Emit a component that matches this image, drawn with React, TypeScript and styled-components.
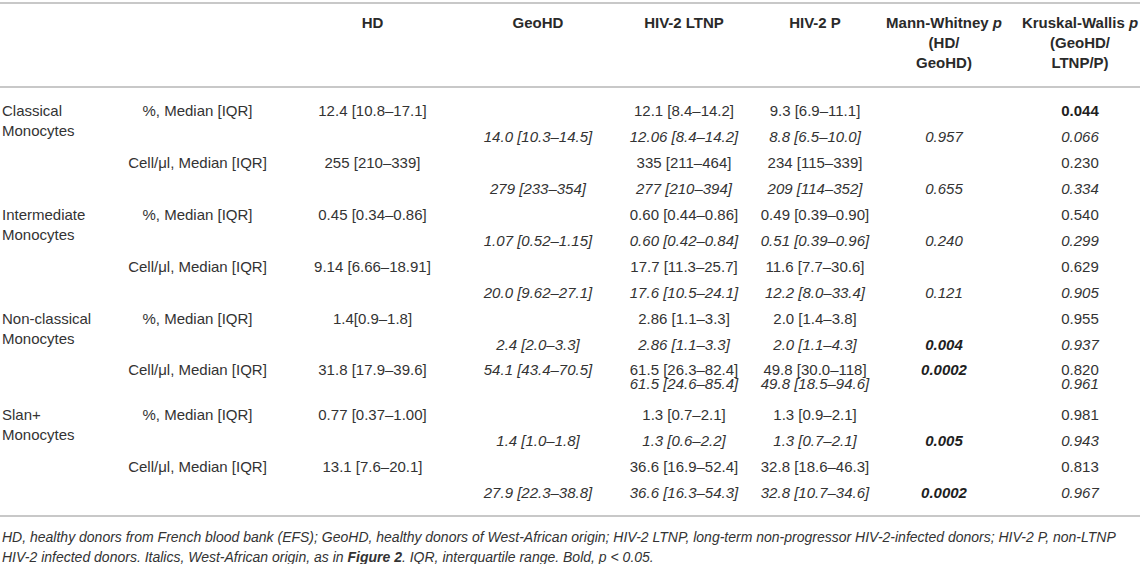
import React from "react";
import styled, { createGlobalStyle } from "styled-components";

const GlobalStyle = createGlobalStyle`
  body {
    margin: 0;
    background: #ffffff;
  }
`;

const VALUE_COLS = "155px 195px 136px 156px 106px 152px 120px";
const LABEL_COL = "120px";

const Page = styled.div`
  width: 1140px;
  padding-top: 2px;
  font-family: "Liberation Sans", Arial, sans-serif;
  font-size: 15px;
  color: #333333;
`;

const Head = styled.div`
  display: grid;
  grid-template-columns: ${LABEL_COL} ${VALUE_COLS};
  border-top: 2px solid #c8c8c8;
  border-bottom: 2px solid #c8c8c8;
  padding: 9px 0 13px;
  line-height: 20px;
`;

const HeadCell = styled.div`
  display: flex;
  flex-direction: column;
  align-items: center;
  font-weight: bold;
  white-space: nowrap;
  color: #2a2a2a;
`;

const Body = styled.div`
  padding: 10px 0 9px;
  border-bottom: 2px solid #c8c8c8;
`;

const Group = styled.div`
  display: grid;
  grid-template-columns: ${LABEL_COL} 1fr;
`;

const GroupLabel = styled.div`
  padding: 3px 0 0 2px;
  line-height: 20px;
`;

const Lines = styled.div`
  display: flex;
  flex-direction: column;
`;

const Line = styled.div<{ $h: number; $lh: number }>`
  display: grid;
  grid-template-columns: ${VALUE_COLS};
  height: ${(p) => p.$h}px;
  line-height: ${(p) => p.$lh}px;
  align-items: start;
`;

const Cell = styled.div<{ $italic?: boolean; $bold?: boolean }>`
  display: flex;
  justify-content: center;
  white-space: nowrap;
  font-style: ${(p) => (p.$italic ? "italic" : "normal")};
  font-weight: ${(p) => (p.$bold ? "bold" : "normal")};
  color: ${(p) => (p.$bold ? "#1e1e1e" : "inherit")};
`;

const Note = styled.div`
  padding: 10px 0 0 2px;
  font-size: 14px;
  line-height: 20px;
  font-style: italic;
  white-space: nowrap;
`;

type Val = { t: string; i?: boolean; b?: boolean };
type LineData = { m?: string; v: (Val | string)[]; it?: boolean; h?: number; lh?: number };
type GroupData = { name: string[]; lines: LineData[] };

const bd = (t: string): Val => ({ t, b: true, i: false });
const bi = (t: string): Val => ({ t, b: true, i: true });
const it = (t: string): Val => ({ t, i: true });

const PCT = "%, Median [IQR]";
const CELL = "Cell/μl, Median [IQR]";
const PITCH = 26;

const groups: GroupData[] = [
  {
    name: ["Classical", "Monocytes"],
    lines: [
      { m: PCT, v: ["12.4 [10.8–17.1]", "", "12.1 [8.4–14.2]", "9.3 [6.9–11.1]", "", bd("0.044")] },
      { it: true, v: ["", "14.0 [10.3–14.5]", "12.06 [8.4–14.2]", "8.8 [6.5–10.0]", "0.957", "0.066"] },
      { m: CELL, v: ["255 [210–339]", "", "335 [211–464]", "234 [115–339]", "", "0.230"] },
      { it: true, v: ["", "279 [233–354]", "277 [210–394]", "209 [114–352]", "0.655", "0.334"] },
    ],
  },
  {
    name: ["Intermediate", "Monocytes"],
    lines: [
      { m: PCT, v: ["0.45 [0.34–0.86]", "", "0.60 [0.44–0.86]", "0.49 [0.39–0.90]", "", "0.540"] },
      { it: true, v: ["", "1.07 [0.52–1.15]", "0.60 [0.42–0.84]", "0.51 [0.39–0.96]", "0.240", "0.299"] },
      { m: CELL, v: ["9.14 [6.66–18.91]", "", "17.7 [11.3–25.7]", "11.6 [7.7–30.6]", "", "0.629"] },
      { it: true, v: ["", "20.0 [9.62–27.1]", "17.6 [10.5–24.1]", "12.2 [8.0–33.4]", "0.121", "0.905"] },
    ],
  },
  {
    name: ["Non-classical", "Monocytes"],
    lines: [
      { m: PCT, v: ["1.4[0.9–1.8]", "", "2.86 [1.1–3.3]", "2.0 [1.4–3.8]", "", "0.955"] },
      { it: true, v: ["", "2.4 [2.0–3.3]", "2.86 [1.1–3.3]", "2.0 [1.1–4.3]", bi("0.004"), "0.937"] },
      {
        m: CELL,
        h: 24,
        lh: 24,
        v: ["31.8 [17.9–39.6]", it("54.1 [43.4–70.5]"), "61.5 [26.3–82.4]", "49.8 [30.0–118]", bi("0.0002"), "0.820"],
      },
      { it: true, h: 20, lh: 4, v: ["", "", "61.5 [24.6–85.4]", "49.8 [18.5–94.6]", "", "0.961"] },
    ],
  },
  {
    name: ["Slan+", "Monocytes"],
    lines: [
      { m: PCT, v: ["0.77 [0.37–1.00]", "", "1.3 [0.7–2.1]", "1.3 [0.9–2.1]", "", "0.981"] },
      { it: true, v: ["", "1.4 [1.0–1.8]", "1.3 [0.6–2.2]", "1.3 [0.7–2.1]", bi("0.005"), "0.943"] },
      { m: CELL, v: ["13.1 [7.6–20.1]", "", "36.6 [16.9–52.4]", "32.8 [18.6–46.3]", "", "0.813"] },
      { it: true, v: ["", "27.9 [22.3–38.8]", "36.6 [16.3–54.3]", "32.8 [10.7–34.6]", bi("0.0002"), "0.967"] },
    ],
  },
];

const headers: string[][] = [
  [""],
  [""],
  ["HD"],
  ["GeoHD"],
  ["HIV-2 LTNP"],
  ["HIV-2 P"],
  ["Mann-Whitney p", "(HD/", "GeoHD)"],
  ["Kruskal-Wallis p", "(GeoHD/", "LTNP/P)"],
];

function HeadLine({ text }: { text: string }) {
  // a trailing " p" is the italic statistic symbol
  if (text.endsWith(" p")) {
    return (
      <span>
        {text.slice(0, -1)}
        <i>p</i>
      </span>
    );
  }
  return <span>{text}</span>;
}

function TableLine({ line }: { line: LineData }) {
  const h = line.h ?? PITCH;
  return (
    <Line $h={h} $lh={line.lh ?? h}>
      <Cell>{line.m ?? ""}</Cell>
      {line.v.map((x, k) => {
        const v: Val = typeof x === "string" ? { t: x } : x;
        return (
          <Cell key={k} $italic={v.i ?? line.it} $bold={v.b}>
            {v.t}
          </Cell>
        );
      })}
    </Line>
  );
}

export default function App() {
  return (
    <Page>
      <GlobalStyle />
      <Head>
        {headers.map((lines, k) => (
          <HeadCell key={k}>
            {lines.map((t, j) => (
              <HeadLine key={j} text={t} />
            ))}
          </HeadCell>
        ))}
      </Head>
      <Body>
        {groups.map((g) => (
          <Group key={g.name[0]}>
            <GroupLabel>
              {g.name[0]}
              <br />
              {g.name[1]}
            </GroupLabel>
            <Lines>
              {g.lines.map((l, k) => (
                <TableLine key={k} line={l} />
              ))}
            </Lines>
          </Group>
        ))}
      </Body>
      <Note>
        HD, healthy donors from French blood bank (EFS); GeoHD, healthy donors of West-African origin; HIV-2 LTNP,
        long-term non-progressor HIV-2-infected donors; HIV-2 P, non-LTNP
        <br />
        HIV-2 infected donors. Italics, West-African origin, as in <b>Figure 2</b>. IQR, interquartile range. Bold,{" "}
        p {"<"} 0.05.
      </Note>
    </Page>
  );
}
